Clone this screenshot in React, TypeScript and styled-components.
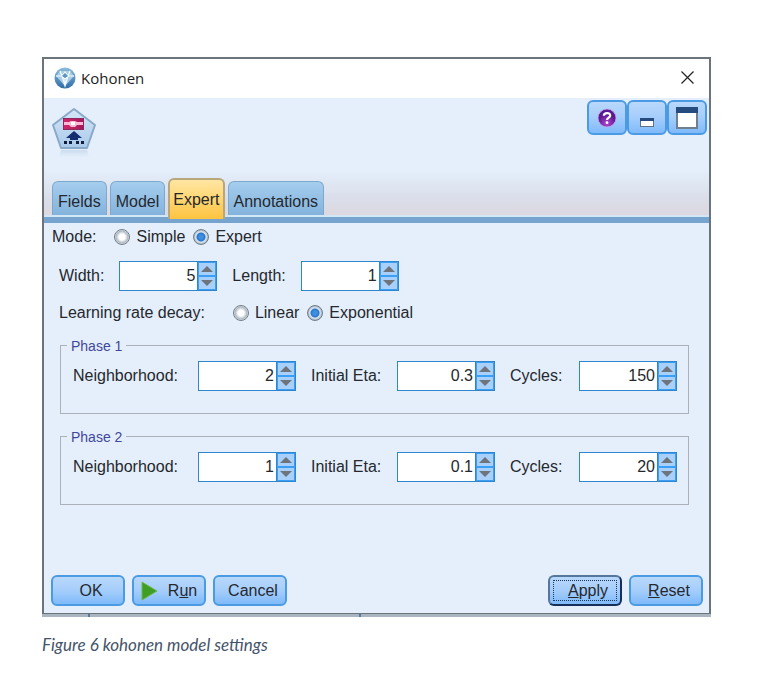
import React, { useState } from 'react';
import styled, { createGlobalStyle, css } from 'styled-components';

const GlobalStyle = createGlobalStyle`
  *, *::before, *::after { box-sizing: border-box; }
  body { margin: 0; background: #ffffff; }
  button, input { font: inherit; color: inherit; margin: 0; }
`;

const Page = styled.main`
  padding: 57px 54px 16px 42px;
  font-family: 'Liberation Sans', Arial, sans-serif;
  font-size: 16px;
  line-height: 20px;
  color: #25282e;
`;

const Figure = styled.figure`
  margin: 0;
`;

const Dialog = styled.section`
  border: 2px solid #6b737b;
  border-bottom-width: 1px;
  background: #e4effb;
`;

const TitleBar = styled.header`
  display: flex;
  align-items: center;
  gap: 5px;
  height: 39px;
  padding: 0 14px 2px 10px;
  background: #ffffff;
`;

const Title = styled.h1`
  flex: 1;
  margin: 0;
  font: 400 15px/20px 'Open Sans', sans-serif;
  color: #1c1c1c;
`;

const CloseButton = styled.button`
  display: flex;
  padding: 0;
  border: 0;
  background: none;
`;

const Banner = styled.div`
  display: flex;
  flex-direction: column;
  justify-content: space-between;
  height: 119px;
  background: linear-gradient(#e4effb 62%, #dadeea 85%, #dcd8e0);
  border-bottom: 2px solid #d3e6f6;
`;

const BannerTop = styled.div`
  display: flex;
  justify-content: space-between;
  align-items: flex-start;
  padding: 2px 2px 0 7px;
`;

const NodeIcon = styled.svg`
  margin-top: 7px;
`;

const glossy = css`
  border: 2px solid #4a9be4;
  border-radius: 6px;
  background: linear-gradient(#b9d8fb, #a5cdfb 50%, #7fbafa);
`;

const ToolGroup = styled.div`
  display: flex;
`;

const ToolButton = styled.button`
  ${glossy}
  display: flex;
  align-items: center;
  justify-content: center;
  width: 40px;
  height: 35px;
  padding: 0;
`;

const Tabs = styled.nav`
  display: flex;
  align-items: flex-end;
  gap: 3px;
  padding: 0 8px;
`;

const Tab = styled.button<{ $active: boolean }>`
  height: 34px;
  padding: 6px 5px 0;
  border: 1px solid #7fa9cc;
  border-bottom: 0;
  border-radius: 6px 6px 0 0;
  background: linear-gradient(#a5cdee, #83b3dc);
  line-height: 20px;
  white-space: nowrap;
  ${({ $active }) =>
    $active &&
    css`
      z-index: 1;
      height: 41px;
      margin-bottom: -4px;
      padding: 0 3px;
      border: 2px solid #b7a77b;
      border-bottom: 0;
      background: linear-gradient(#ffe6a3, #ffd876 45%, #fdc340);
    `}
`;

const TabRule = styled.div`
  height: 6px;
  background: #76a4cf;
`;

const Panel = styled.form`
  padding: 4px 8px 7px;
`;

const Row = styled.div`
  display: flex;
  align-items: center;
`;

const ModeRow = styled(Row)`
  gap: 18px;
`;

const SizeRow = styled(Row)`
  gap: 15px;
  margin: 14px 0 0 7px;
`;

const DecayRow = styled(Row)`
  gap: 28px;
  margin: 12px 0 0 7px;
`;

const Choices = styled.div`
  display: flex;
  gap: 8px;
`;

const Choice = styled.label`
  display: flex;
  align-items: center;
  gap: 6px;
`;

const Radio = styled.input`
  appearance: none;
  width: 16px;
  height: 16px;
  border: 1px solid #737c86;
  border-radius: 50%;
  background: radial-gradient(circle, #ffffff 0 3px, #e2e8ec 4px, #aeb8c1 6px, #dce5ec 7px);
  &:checked {
    background: radial-gradient(circle, #3d8fe0 0 2px, #2a75c9 4px, #dce8f3 5px, #a8b8c6 7px);
  }
`;

const Group = styled.fieldset`
  min-width: 0;
  margin: 12px 12px 0 8px;
  padding: 6px 12px 22px;
  border: 1px solid #abb1ba;
`;

const GroupTitle = styled.legend`
  margin-left: -6px;
  padding: 2px 4px 0;
  font-size: 14px;
  line-height: 18px;
  color: #41479a;
`;

const GroupGrid = styled.div`
  display: grid;
  grid-template-columns: 110px 98px 71px 98px 54px 98px;
  column-gap: 15px;
  align-items: center;
`;

const FieldLabel = styled.label`
  white-space: nowrap;
`;

const Spin = styled.div`
  display: flex;
  width: 98px;
  height: 30px;
  border: 1px solid #2f86cf;
  background: #ffffff;
`;

const SpinInput = styled.input`
  flex: 1;
  min-width: 0;
  padding: 0 2px;
  border: 0;
  background: #ffffff;
  text-align: right;
  outline: none;
`;

const Arrows = styled.div`
  display: grid;
  grid-template-rows: 1fr 1fr;
  width: 19px;
  border-left: 1px solid #2f86cf;
`;

const Arrow = styled.button`
  display: flex;
  align-items: center;
  justify-content: center;
  padding: 0;
  border: 1px solid #3b9ff5;
  background: #a9d0fa;
`;

const Footer = styled(Row)`
  gap: 7px;
  margin: 70px -2px 0 -1px;
`;

const Spacer = styled.span`
  flex: 1;
`;

const ActionButton = styled.button<{ $focused?: boolean }>`
  ${glossy}
  display: flex;
  align-items: center;
  justify-content: center;
  width: 74px;
  height: 31px;
  padding: 0 0 0 6px;
  ${({ $focused }) =>
    $focused &&
    css`
      border-color: #56779b #16305a #16305a #56779b;
      outline: 1px dotted #1d3557;
      outline-offset: -6px;
    `}
`;

const RunButton = styled(ActionButton)`
  gap: 10px;
  padding: 0;
`;

const Backdrop = styled.div`
  display: flex;
  height: 3px;
  padding: 0 350px 0 46px;
  justify-content: space-between;
  background: #a9b6c2;
`;

const Tick = styled.span`
  width: 2px;
  background: #5c7998;
`;

const Caption = styled.figcaption`
  margin-top: 17px;
  font: italic 400 17px/22px Lato, sans-serif;
  color: #44546a;
`;

function Spinner({ id, initial, step = 1 }: { id: string; initial: string; step?: number }) {
  const [value, setValue] = useState(initial);
  const change = (sign: number) => setValue(String(Math.round((Number(value) + sign * step) * 10) / 10));
  return (
    <Spin>
      <SpinInput id={id} type="text" inputMode="decimal" value={value} onChange={(e) => setValue(e.target.value)} />
      <Arrows>
        <Arrow type="button" aria-label="Increase" onClick={() => change(1)}>
          <svg width="12" height="6" viewBox="0 0 12 6"><path d="M6 0L12 6H0Z" fill="#6d747c" /></svg>
        </Arrow>
        <Arrow type="button" aria-label="Decrease" onClick={() => change(-1)}>
          <svg width="12" height="6" viewBox="0 0 12 6"><path d="M0 0H12L6 6Z" fill="#6d747c" /></svg>
        </Arrow>
      </Arrows>
    </Spin>
  );
}

function RadioPair({ name, options, initial }: { name: string; options: string[]; initial: string }) {
  const [value, setValue] = useState(initial);
  return (
    <Choices role="radiogroup" aria-label={name}>
      {options.map((option) => (
        <Choice key={option}>
          <Radio type="radio" name={name} checked={value === option} onChange={() => setValue(option)} />
          {option}
        </Choice>
      ))}
    </Choices>
  );
}

function Phase({ number, neighborhood, eta, cycles }: { number: number; neighborhood: string; eta: string; cycles: string }) {
  const id = `phase${number}`;
  return (
    <Group>
      <GroupTitle>Phase {number}</GroupTitle>
      <GroupGrid>
        <FieldLabel htmlFor={`${id}-n`}>Neighborhood:</FieldLabel>
        <Spinner id={`${id}-n`} initial={neighborhood} />
        <FieldLabel htmlFor={`${id}-e`}>Initial Eta:</FieldLabel>
        <Spinner id={`${id}-e`} initial={eta} step={0.1} />
        <FieldLabel htmlFor={`${id}-c`}>Cycles:</FieldLabel>
        <Spinner id={`${id}-c`} initial={cycles} />
      </GroupGrid>
    </Group>
  );
}

function GemIcon() {
  return (
    <svg width="22" height="22" viewBox="0 0 22 22">
      <defs>
        <linearGradient id="gem" x2="0" y2="1">
          <stop stopColor="#8dbcdc" />
          <stop offset="1" stopColor="#2f6ea8" />
        </linearGradient>
      </defs>
      <circle cx="11" cy="11" r="10.5" fill="url(#gem)" />
      <path d="M6 4H16L20 9L11 19L2 9Z" fill="#a9cee6" />
      <path d="M6 4L8 9L11 5L14 9L16 4M2 9L8 9L11 19L14 9H20M8 9L11 12L14 9M11 12V19" fill="none" stroke="#f5fbff" strokeWidth="1.2" />
      <path d="M8 9L11 6L14 9L11 11Z" fill="#5c94c2" />
    </svg>
  );
}

function KohonenIcon() {
  return (
    <NodeIcon width="46" height="52" viewBox="0 0 46 52">
      <defs>
        <linearGradient id="pent" x2="0" y2="1">
          <stop stopColor="#d6e7f8" />
          <stop offset="1" stopColor="#a9caea" />
        </linearGradient>
        <linearGradient id="shade" x2="0" y2="1">
          <stop stopColor="#cbdcee" />
          <stop offset="1" stopColor="#e4effb" />
        </linearGradient>
        <linearGradient id="card">
          <stop stopColor="#d8246a" />
          <stop offset="1" stopColor="#a3195a" />
        </linearGradient>
      </defs>
      <path d="M10 43H36L38 50H8Z" fill="url(#shade)" />
      <path d="M23 2L44 18L36 41H10L2 18Z" fill="url(#pent)" stroke="#8aa9c8" strokeWidth="2" strokeLinejoin="round" />
      <rect x="12.5" y="11.5" width="20" height="11" fill="url(#card)" stroke="#8a2a5c" />
      <path d="M13 15H18L20 14H24L26 15H32V18H26L24 20H20L18 18H13Z" fill="#ffb9d3" />
      <path d="M20 15H24V18H20Z" fill="#ffffff" />
      <path d="M23 24L31 31H27V33H19V31H15Z" fill="#142e70" />
      <path d="M13 34h3v3h-3zM18 34h3v3h-3zM25 34h3v3h-3zM30 34h3v3h-3z" fill="#101c3c" />
    </NodeIcon>
  );
}

const tabNames = ['Fields', 'Model', 'Expert', 'Annotations'];

export default function App() {
  const [tab, setTab] = useState('Expert');
  return (
    <Page>
      <GlobalStyle />
      <Figure>
        <Dialog role="dialog" aria-label="Kohonen">
          <TitleBar>
            <GemIcon />
            <Title>Kohonen</Title>
            <CloseButton type="button" aria-label="Close">
              <svg width="15" height="15" viewBox="0 0 15 15"><path d="M1.5 1.5L13.5 13.5M13.5 1.5L1.5 13.5" stroke="#222" strokeWidth="1.2" /></svg>
            </CloseButton>
          </TitleBar>
          <Banner>
            <BannerTop>
              <KohonenIcon />
              <ToolGroup>
                <ToolButton type="button" aria-label="Help">
                  <svg width="20" height="20" viewBox="0 0 20 20">
                    <defs>
                      <radialGradient id="help" cx=".5" cy=".8">
                        <stop stopColor="#b344d4" />
                        <stop offset="1" stopColor="#5a1a90" />
                      </radialGradient>
                    </defs>
                    <circle cx="10" cy="10" r="9" fill="url(#help)" stroke="#c4a3e6" strokeWidth=".8" />
                    <path d="M6.8 7.7C7 4.2 13.4 4.2 13.2 7.6C13.1 9.7 10.2 9.5 10 12" fill="none" stroke="#fff" strokeWidth="2.2" />
                    <circle cx="10" cy="14.7" r="1.4" fill="#fff" />
                  </svg>
                </ToolButton>
                <ToolButton type="button" aria-label="Minimize">
                  <svg width="22" height="22" viewBox="0 0 22 22">
                    <rect x="4.5" y="11.5" width="13" height="8" fill="#fff" stroke="#607386" />
                    <path d="M4 11H18V14H4Z" fill="#264b7e" />
                  </svg>
                </ToolButton>
                <ToolButton type="button" aria-label="Maximize">
                  <svg width="22" height="22" viewBox="0 0 22 22">
                    <rect x="1" y="1" width="20" height="20" fill="#fff" stroke="#6d7f91" strokeWidth="2" />
                    <path d="M0 0H22V6H0Z" fill="#264b7e" />
                  </svg>
                </ToolButton>
              </ToolGroup>
            </BannerTop>
            <Tabs role="tablist">
              {tabNames.map((name) => (
                <Tab key={name} type="button" role="tab" aria-selected={tab === name} $active={tab === name} onClick={() => setTab(name)}>
                  {name}
                </Tab>
              ))}
            </Tabs>
          </Banner>
          <TabRule />
          <Panel onSubmit={(e) => e.preventDefault()}>
            <ModeRow>
              <span>Mode:</span>
              <RadioPair name="Mode" options={['Simple', 'Expert']} initial="Expert" />
            </ModeRow>
            <SizeRow>
              <FieldLabel htmlFor="width">Width:</FieldLabel>
              <Spinner id="width" initial="5" />
              <FieldLabel htmlFor="length">Length:</FieldLabel>
              <Spinner id="length" initial="1" />
            </SizeRow>
            <DecayRow>
              <span>Learning rate decay:</span>
              <RadioPair name="Learning rate decay" options={['Linear', 'Exponential']} initial="Exponential" />
            </DecayRow>
            <Phase number={1} neighborhood="2" eta="0.3" cycles="150" />
            <Phase number={2} neighborhood="1" eta="0.1" cycles="20" />
            <Footer>
              <ActionButton type="submit">OK</ActionButton>
              <RunButton type="button">
                <svg width="17" height="20" viewBox="0 0 17 20"><path d="M1 1L16 10L1 19Z" fill="#3f9f24" stroke="#6eb84c" /></svg>
                <span>R<u>u</u>n</span>
              </RunButton>
              <ActionButton type="button">Cancel</ActionButton>
              <Spacer />
              <ActionButton type="button" $focused><span><u>A</u>pply</span></ActionButton>
              <ActionButton type="button"><span><u>R</u>eset</span></ActionButton>
            </Footer>
          </Panel>
        </Dialog>
        <Backdrop>
          <Tick />
          <Tick />
        </Backdrop>
        <Caption>Figure 6 kohonen model settings</Caption>
      </Figure>
    </Page>
  );
}
